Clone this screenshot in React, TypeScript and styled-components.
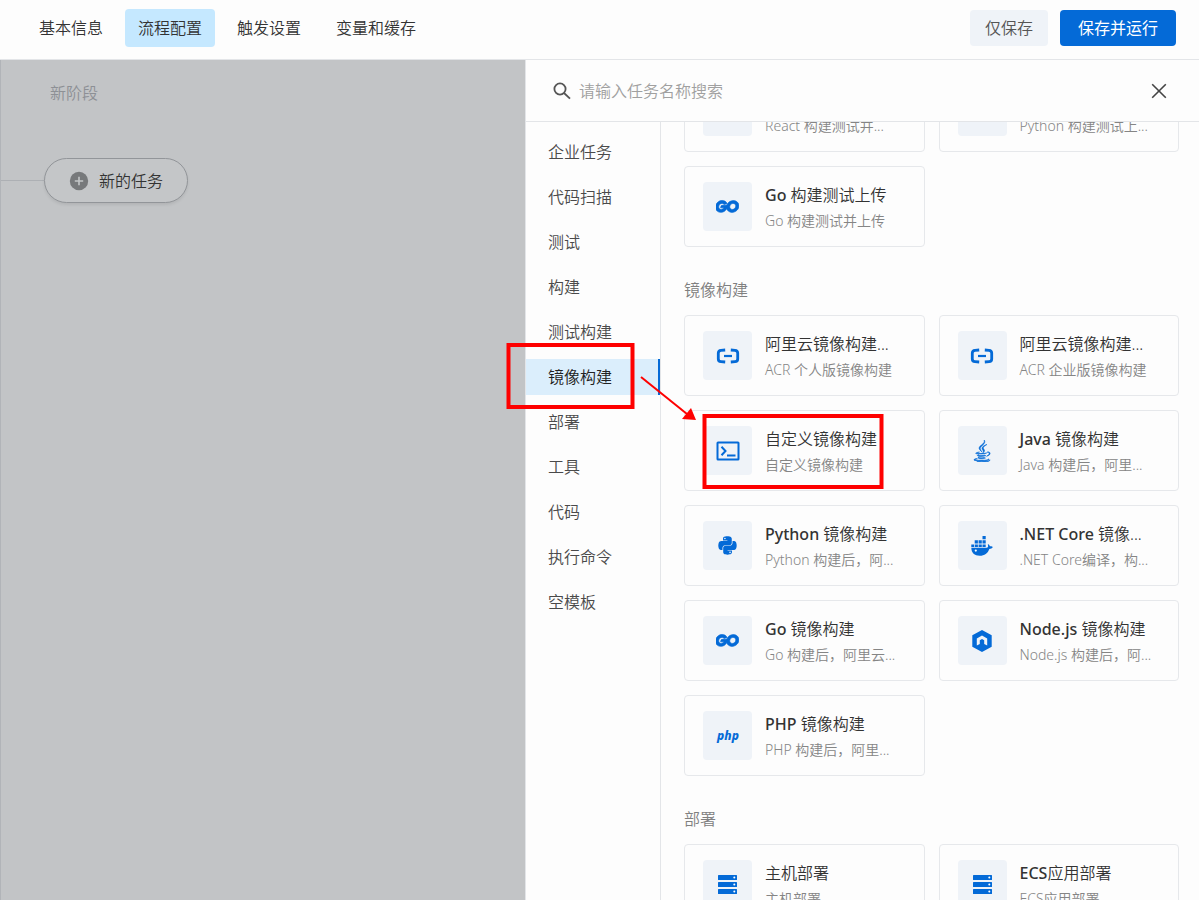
import React, { useLayoutEffect, useRef, useState } from "react";
import styled, { createGlobalStyle, css } from "styled-components";
import { FaJava, FaPython, FaReact } from "react-icons/fa";
import { SiGo } from "react-icons/si";

const GlobalStyle = createGlobalStyle`
  *, *::before, *::after { box-sizing: border-box; }
  body {
    margin: 0;
    background: #fdfdfd;
    color: #333;
    font-family: "Noto Sans", "Noto Sans CJK SC", sans-serif;
    font-size: 16px;
    font-weight: 350;
    line-height: 24px;
  }
  button, input { font: inherit; color: inherit; }
  button { cursor: pointer; }
`;

const Page = styled.div`
  display: flex;
  flex-direction: column;
  height: 100vh;
  overflow: hidden;
`;

const TopBar = styled.header`
  display: flex;
  align-items: center;
  justify-content: space-between;
  flex: none;
  height: 60px;
  padding: 0 23px 3px 26px;
  border-bottom: 1px solid #e3e5e8;
`;

const Tabs = styled.nav`
  display: flex;
  gap: 9px;
`;

const Tab = styled.button<{ $active?: boolean }>`
  height: 38px;
  padding: 0 13px;
  border: 0;
  border-radius: 4px;
  background: ${(p) => (p.$active ? "#c5e8ff" : "transparent")};
`;

const Actions = styled.div`
  display: flex;
  gap: 12px;
`;

const ActionButton = styled.button<{ $primary?: boolean }>`
  height: 36px;
  border: 0;
  border-radius: 4px;
  padding: 0 15px;
  background: #eff3f8;
  color: #555;
  ${(p) =>
    p.$primary &&
    css`
      padding: 0 18px;
      background: #046ad7;
      color: #fff;
      font-weight: 400;
    `}
`;

const Workspace = styled.main`
  display: grid;
  grid-template-columns: 525fr 674fr;
  flex: 1;
  min-height: 0;
`;

const Canvas = styled.section`
  padding: 21px 0 0;
  border-left: 1px solid #b1b4b8;
  background: #c2c4c6;
`;

const StageName = styled.h2`
  margin: 0 0 53px 49px;
  color: #8d9095;
  font-size: 16px;
  font-weight: inherit;
`;

const Lane = styled.div`
  display: flex;
  align-items: center;
`;

const Connector = styled.span`
  width: 43px;
  height: 1px;
  background: #adb0b4;
`;

const NewTask = styled.button`
  display: flex;
  align-items: center;
  gap: 10px;
  height: 45px;
  padding: 0 24px;
  border: 1px solid #929599;
  border-radius: 23px;
  background: #c4c6c8;
  box-shadow: 0 2px 3px rgba(0, 0, 0, 0.08);
`;

const Drawer = styled.aside`
  position: relative;
  display: flex;
  flex-direction: column;
  min-width: 0;
  min-height: 0;
  border-left: 1px solid #e3e5e8;
  background: #fdfdfd;
`;

const SearchBar = styled.div`
  display: flex;
  align-items: center;
  gap: 8px;
  flex: none;
  height: 62px;
  padding: 0 32px 0 27px;
  border-bottom: 1px solid #e3e5e8;
`;

const SearchField = styled.label`
  display: flex;
  align-items: center;
  gap: 8px;
  flex: 1;
`;

const SearchInput = styled.input`
  flex: 1;
  min-width: 0;
  padding: 0;
  border: 0;
  outline: 0;
  background: transparent;
  &::placeholder { color: #a0a0a0; opacity: 1; }
`;

const CloseButton = styled.button`
  display: flex;
  padding: 0;
  border: 0;
  background: transparent;
`;

const DrawerBody = styled.div`
  display: flex;
  flex: 1;
  min-height: 0;
`;

const Categories = styled.nav`
  display: flex;
  flex-direction: column;
  gap: 9px;
  flex: none;
  width: 135px;
  padding-top: 12px;
  border-right: 1px solid #e3e5e8;
`;

const Category = styled.a<{ $active?: boolean }>`
  height: 36px;
  padding: 0 20px 0 22px;
  border-right: 2px solid ${(p) => (p.$active ? "#046ad7" : "transparent")};
  background: ${(p) => (p.$active ? "#dbeefc" : "transparent")};
  color: ${(p) => (p.$active ? "#222" : "#4a4a4a")};
  line-height: 36px;
  text-decoration: none;
`;

const TaskList = styled.div`
  flex: 1;
  min-width: 0;
  padding: 0 20px 40px 23px;
  overflow-y: auto;
  scrollbar-width: none;
`;

const Group = styled.section`
  margin-bottom: 31px;
`;

const GroupTitle = styled.h3`
  margin: 0 0 13px;
  color: #808080;
  font-size: 16px;
  font-weight: inherit;
`;

const Cards = styled.div`
  display: grid;
  grid-template-columns: repeat(2, minmax(0, 1fr));
  gap: 14px;
`;

const Card = styled.button`
  display: flex;
  align-items: flex-start;
  gap: 13px;
  height: 81px;
  padding: 15px 18px 13px;
  border: 1px solid #e6e8eb;
  border-radius: 4px;
  background: transparent;
  text-align: left;
`;

const IconTile = styled.span`
  display: flex;
  align-items: center;
  justify-content: center;
  flex: none;
  width: 49px;
  height: 49px;
  border-radius: 4px;
  background: #eff3f8;
  color: #046ad7;
`;

const CardText = styled.span`
  display: flex;
  flex-direction: column;
  min-width: 0;
  white-space: nowrap;
`;

const CardTitle = styled.span`
  line-height: 26px;
`;

const Latin = styled.span`
  font-weight: 500;
`;

const CardNote = styled.span`
  color: #858585;
  font-size: 14px;
  line-height: 25px;
`;

const Annotation = styled.svg`
  position: absolute;
  top: 282px;
  left: -20px;
  overflow: visible;
  pointer-events: none;
`;

const SearchIcon = () => (
  <svg width="18" height="18" viewBox="0 0 18 18" fill="none" stroke="#555" strokeWidth="1.8" aria-hidden="true">
    <circle cx="7" cy="7" r="5.6" />
    <path d="M11 11l6 5.6" />
  </svg>
);

const CloseIcon = () => (
  <svg width="16" height="16" viewBox="0 0 16 16" fill="none" stroke="#444" strokeWidth="1.6" aria-hidden="true">
    <path d="M1.2 1.2l13.6 13.6M14.8 1.2L1.2 14.8" />
  </svg>
);

const PlusIcon = () => (
  <svg width="20" height="20" viewBox="0 0 20 20" aria-hidden="true">
    <circle cx="10" cy="10" r="9.2" fill="#77797b" />
    <path d="M10 5.8v8.4M5.8 10h8.4" stroke="#c4c6c8" strokeWidth="1.6" />
  </svg>
);

/* The brand mark without its speed lines. */
const GoIcon = () => (
  <SiGo size={23} viewBox="6.8 3.4 17.3 17.3" stroke="currentColor" strokeWidth={0.5} />
);

const AliyunIcon = () => (
  <svg width="24" height="16" viewBox="0 0 24 16" fill="none" stroke="currentColor" aria-hidden="true">
    <path d="M9.200 2L5 2.300Q2.300 2.500 2.300 5v6q0 2.500 2.700 2.700L9.200 14" strokeWidth="2.800" />
    <path d="M14.800 2L19 2.300Q21.700 2.500 21.700 5v6q0 2.500-2.700 2.700L14.800 14" strokeWidth="2.800" />
    <path d="M8 8h8" strokeWidth="2.200" />
  </svg>
);

const TerminalIcon = () => (
  <svg width="24" height="20" viewBox="0 0 24 20" fill="none" stroke="currentColor" strokeWidth="2" aria-hidden="true">
    <rect x="1.500" y="1.500" width="21" height="17" rx="0.500" />
    <path d="M5.500 5.800l4 4.200-4 4.200M11 14.600h8.500" />
  </svg>
);

const DockerIcon = () => (
  <svg width="22" height="20" viewBox="0 0 22 20" fill="currentColor" aria-hidden="true">
    <path d="M11.500 0h3.200v3.200h-3.200zM3.700 4.300h3.200v3.200H3.700zM7.600 4.300h3.200v3.200H7.600zM11.500 4.300h3.200v3.200h-3.200zM.3 8.500H3v2.600H.3zM3.700 8.500h3.200v2.600H3.700zM7.600 8.500h3.200v2.600H7.600zM11.500 8.500h3.200v2.600h-3.200z" />
    <path d="M.3 11.800h14.900c1.300 0 2-.7 1.900-1.800-.1-.7-.3-1.300-.2-2 1.200.6 1.800 1.400 2 2.300 1 0 2 0 3 .6-.7 1.300-2 1.900-3.600 2-1.500 4.400-4.700 6.800-9.600 6.800C3.500 19.700.4 17 .3 11.800z" />
    <circle cx="4.800" cy="14.600" r="1.100" fill="#fff" />
  </svg>
);

const NodeIcon = () => (
  <svg width="20" height="22" viewBox="0 0 20 22" fill="currentColor" fillRule="evenodd" aria-hidden="true">
    <path d="M10 0l9.700 5.300v11.400L10 22 .3 16.700V5.300zM4.800 15.600l3-1.600v-3.800l2.200-1.200 2.200 1.200v3.800l3 1.600V8.500L10 5.600 4.800 8.500z" />
  </svg>
);

const PhpIcon = () => (
  <svg width="24" height="18" viewBox="0 0 24 18" aria-hidden="true">
    <text
      x="12"
      y="13"
      textAnchor="middle"
      fill="currentColor"
      fontFamily="Noto Sans, sans-serif"
      fontSize="12"
      fontStyle="italic"
      fontWeight="800"
    >
      php
    </text>
  </svg>
);

const ServerIcon = () => (
  <svg width="19" height="19" viewBox="0 0 19 19" aria-hidden="true">
    {[0, 7, 14].map((y) => (
      <g key={y}>
        <rect y={y} width="19" height="5" rx="0.500" fill="currentColor" />
        <circle cx="16.300" cy={y + 2.5} r="1" fill="#fff" />
      </g>
    ))}
  </svg>
);

type Task = { title: string; note: string; icon: React.ReactNode };
type TaskGroup = { name?: string; tasks: Task[] };

const groups: TaskGroup[] = [
  {
    tasks: [
      { title: "React 构建测试...", note: "React 构建测试并...", icon: <FaReact size={20} /> },
      { title: "Python 构建测...", note: "Python 构建测试上...", icon: <FaPython size={20} /> },
      { title: "Go 构建测试上传", note: "Go 构建测试并上传", icon: <GoIcon /> },
    ],
  },
  {
    name: "镜像构建",
    tasks: [
      { title: "阿里云镜像构建...", note: "ACR 个人版镜像构建", icon: <AliyunIcon /> },
      { title: "阿里云镜像构建...", note: "ACR 企业版镜像构建", icon: <AliyunIcon /> },
      { title: "自定义镜像构建", note: "自定义镜像构建", icon: <TerminalIcon /> },
      {
        title: "Java 镜像构建",
        note: "Java 构建后，阿里...",
        icon: <FaJava size={22} stroke="currentColor" strokeWidth={14} />,
      },
      { title: "Python 镜像构建", note: "Python 构建后，阿...", icon: <FaPython size={21} /> },
      { title: ".NET Core 镜像...", note: ".NET Core编译，构...", icon: <DockerIcon /> },
      { title: "Go 镜像构建", note: "Go 构建后，阿里云...", icon: <GoIcon /> },
      { title: "Node.js 镜像构建", note: "Node.js 构建后，阿...", icon: <NodeIcon /> },
      { title: "PHP 镜像构建", note: "PHP 构建后，阿里...", icon: <PhpIcon /> },
    ],
  },
  {
    name: "部署",
    tasks: [
      { title: "主机部署", note: "主机部署", icon: <ServerIcon /> },
      { title: "ECS应用部署", note: "ECS应用部署", icon: <ServerIcon /> },
    ],
  },
];

const tabs = ["基本信息", "流程配置", "触发设置", "变量和缓存"];

const categories = [
  "企业任务",
  "代码扫描",
  "测试",
  "构建",
  "测试构建",
  "镜像构建",
  "部署",
  "工具",
  "代码",
  "执行命令",
  "空模板",
];

const INITIAL_SCROLL = 51;

/* Gives the leading Latin words of a title a heavier weight than the Chinese. */
function TitleText({ text }: { text: string }) {
  const latin = text.match(/^[A-Za-z. ]+/)?.[0] ?? "";
  return (
    <CardTitle>
      {latin && <Latin>{latin}</Latin>}
      {text.slice(latin.length)}
    </CardTitle>
  );
}

export default function App() {
  const [query, setQuery] = useState("");
  const listRef = useRef<HTMLDivElement>(null);

  useLayoutEffect(() => {
    if (listRef.current) listRef.current.scrollTop = INITIAL_SCROLL;
  }, []);

  return (
    <Page>
      <GlobalStyle />
      <TopBar>
        <Tabs>
          {tabs.map((name) => (
            <Tab key={name} type="button" $active={name === "流程配置"}>
              {name}
            </Tab>
          ))}
        </Tabs>
        <Actions>
          <ActionButton type="button">仅保存</ActionButton>
          <ActionButton type="button" $primary>
            保存并运行
          </ActionButton>
        </Actions>
      </TopBar>
      <Workspace>
        <Canvas>
          <StageName>新阶段</StageName>
          <Lane>
            <Connector />
            <NewTask type="button">
              <PlusIcon />
              新的任务
            </NewTask>
          </Lane>
        </Canvas>
        <Drawer>
          <SearchBar>
            <SearchField>
              <SearchIcon />
              <SearchInput
                type="text"
                aria-label="搜索任务"
                placeholder="请输入任务名称搜索"
                value={query}
                onChange={(e) => setQuery(e.target.value)}
              />
            </SearchField>
            <CloseButton type="button" aria-label="关闭">
              <CloseIcon />
            </CloseButton>
          </SearchBar>
          <DrawerBody>
            <Categories>
              {categories.map((name) => (
                <Category key={name} href="#" $active={name === "镜像构建"}>
                  {name}
                </Category>
              ))}
            </Categories>
            <TaskList ref={listRef}>
              {groups.map((group, index) => (
                <Group key={index}>
                  {group.name && <GroupTitle>{group.name}</GroupTitle>}
                  <Cards>
                    {group.tasks.map((task) => (
                      <Card key={task.title + task.note} type="button">
                        <IconTile>{task.icon}</IconTile>
                        <CardText>
                          <TitleText text={task.title} />
                          <CardNote>{task.note}</CardNote>
                        </CardText>
                      </Card>
                    ))}
                  </Cards>
                </Group>
              ))}
            </TaskList>
          </DrawerBody>
          <Annotation width="378" height="147" viewBox="0 0 378 147" fill="none" stroke="#fe0000" aria-hidden="true">
            <rect x="2.500" y="3" width="124" height="62" strokeWidth="4" />
            <rect x="198.500" y="74" width="177" height="71" strokeWidth="4" />
            <path d="M135 35l46 37" strokeWidth="2" />
            <path d="M190 78l-14-1 9-11z" fill="#fe0000" stroke="none" />
          </Annotation>
        </Drawer>
      </Workspace>
    </Page>
  );
}
